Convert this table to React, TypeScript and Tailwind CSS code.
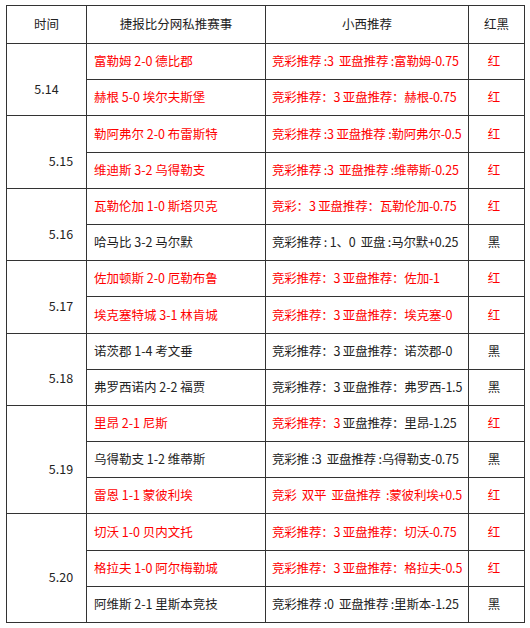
type Row = {
  match: string;
  tip: React.ReactNode;
  win: boolean;
  matchRed: boolean;
  tipRed: boolean;
};

type Day = { date: string; shift: boolean; rows: Row[] };

const RED = "text-[#ff0000]";
const DARK = "text-[#222]";

const days: Day[] = [
  {
    date: "5.14",
    shift: false,
    rows: [
      { match: "富勒姆 2-0 德比郡", tip: "竞彩推荐 :3  亚盘推荐 :富勒姆-0.75", win: true, matchRed: true, tipRed: true },
      { match: "赫根 5-0 埃尔夫斯堡", tip: "竞彩推荐：3 亚盘推荐：赫根-0.75", win: true, matchRed: true, tipRed: true },
    ],
  },
  {
    date: "5.15",
    shift: true,
    rows: [
      { match: "勒阿弗尔 2-0 布雷斯特", tip: "竞彩推荐 :3 亚盘推荐 :勒阿弗尔-0.5", win: true, matchRed: true, tipRed: true },
      { match: "维迪斯 3-2 乌得勒支", tip: "竞彩推荐 :3  亚盘推荐 :维蒂斯-0.25", win: true, matchRed: true, tipRed: true },
    ],
  },
  {
    date: "5.16",
    shift: true,
    rows: [
      { match: "瓦勒伦加 1-0 斯塔贝克", tip: "竞彩：3 亚盘推荐：瓦勒伦加-0.75", win: true, matchRed: true, tipRed: true },
      { match: "哈马比 3-2 马尔默", tip: "竞彩推荐 : 1、0  亚盘 :马尔默+0.25", win: false, matchRed: false, tipRed: false },
    ],
  },
  {
    date: "5.17",
    shift: true,
    rows: [
      { match: "佐加顿斯 2-0 厄勒布鲁", tip: "竞彩推荐：3 亚盘推荐：佐加-1", win: true, matchRed: true, tipRed: true },
      { match: "埃克塞特城 3-1 林肯城", tip: "竞彩推荐：3 亚盘推荐：埃克塞-0", win: true, matchRed: true, tipRed: true },
    ],
  },
  {
    date: "5.18",
    shift: true,
    rows: [
      { match: "诺茨郡 1-4 考文垂", tip: "竞彩推荐：3 亚盘推荐：诺茨郡-0", win: false, matchRed: false, tipRed: false },
      { match: "弗罗西诺内 2-2 福贾", tip: "竞彩推荐：3 亚盘推荐：弗罗西-1.5", win: false, matchRed: false, tipRed: false },
    ],
  },
  {
    date: "5.19",
    shift: true,
    rows: [
      {
        match: "里昂 2-1 尼斯",
        tip: (
          <>
            <span className={RED}>竞彩推荐：3</span> 亚盘推荐：里昂-1.25
          </>
        ),
        win: true,
        matchRed: true,
        tipRed: false,
      },
      { match: "乌得勒支 1-2 维蒂斯", tip: "竞彩推 :3  亚盘推荐 :乌得勒支-0.75", win: false, matchRed: false, tipRed: false },
      { match: "雷恩 1-1 蒙彼利埃", tip: "竞彩  双平  亚盘推荐  :蒙彼利埃+0.5", win: true, matchRed: true, tipRed: true },
    ],
  },
  {
    date: "5.20",
    shift: true,
    rows: [
      { match: "切沃 1-0 贝内文托", tip: "竞彩推荐：3 亚盘推荐：切沃-0.75", win: true, matchRed: true, tipRed: true },
      { match: "格拉夫 1-0 阿尔梅勒城", tip: "竞彩推荐：3 亚盘推荐：格拉夫-0.5", win: true, matchRed: true, tipRed: true },
      { match: "阿维斯 2-1 里斯本竞技", tip: "竞彩推荐 :0  亚盘推荐 :里斯本-1.25", win: false, matchRed: false, tipRed: false },
    ],
  },
];

export default function App() {
  return (
    <div className="w-[530px] h-[628px] bg-white pt-[5px] pl-[6px] font-['Noto_Sans_CJK_SC',sans-serif] text-[12.5px]">
      <table className="w-[518px] border-collapse table-fixed">
        <colgroup>
          <col className="w-[80px]" />
          <col className="w-[179px]" />
          <col className="w-[203px]" />
          <col className="w-[56px]" />
        </colgroup>
        <thead>
          <tr className="h-[38px]">
            <th className="border border-[#333] font-normal text-[#222] text-center">时间</th>
            <th className="border border-[#333] font-normal text-[#222] text-center">捷报比分网私推赛事</th>
            <th className="border border-[#333] font-normal text-[#222] text-center">小西推荐</th>
            <th className="border border-[#333] font-normal text-[#222] text-center">红黑</th>
          </tr>
        </thead>
        <tbody>
          {days.map((d) =>
            d.rows.map((r, i) => (
              <tr key={d.date + i} className="h-[36.2px]">
                {i === 0 && (
                  <td
                    rowSpan={d.rows.length}
                    className={`border border-[#333] text-[#222] text-center align-middle pt-[19px] ${d.shift ? "pl-[29px]" : ""}`}
                  >
                    {d.date}
                  </td>
                )}
                <td className={`border border-[#333] pl-[7px] whitespace-nowrap ${r.matchRed ? RED : DARK}`}>{r.match}</td>
                <td className={`border border-[#333] pl-[6px] whitespace-pre overflow-hidden tracking-[-0.2px] ${r.tipRed ? RED : DARK}`}>{r.tip}</td>
                <td className={`border border-[#333] text-center pr-[5px] ${r.win ? RED : DARK}`}>{r.win ? "红" : "黑"}</td>
              </tr>
            ))
          )}
        </tbody>
      </table>
    </div>
  );
}
